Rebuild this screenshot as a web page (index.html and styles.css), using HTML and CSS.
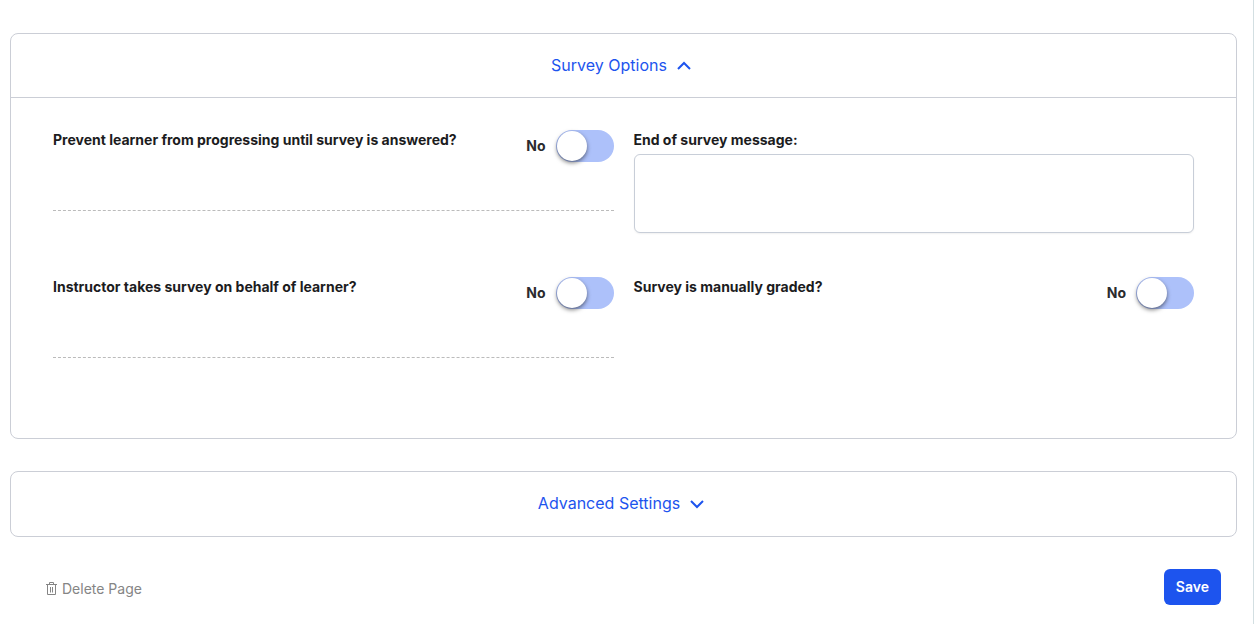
FILE: index.html
```html
<!DOCTYPE html>
<html lang="en">
<head>
  <meta charset="UTF-8">
  <title>Survey Settings</title>
  <link rel="stylesheet" href="styles.css">
</head>
<body>
  <form class="page">
    <!-- Survey options -->
    <section class="panel">
      <button type="button" class="panel-header open" aria-expanded="true" aria-controls="surveyOptions">
        Survey Options
        <svg class="chevron" viewBox="0 0 24 24" aria-hidden="true">
          <path d="M6 16l6-6 6 6"/>
        </svg>
      </button>

      <div id="surveyOptions" class="options">
        <div class="option divided">
          <label class="option-label" for="preventProgress">Prevent learner from progressing until survey is answered?</label>
          <div class="toggle">
            <span class="toggle-text">No</span>
            <input type="checkbox" class="switch" id="preventProgress" name="preventProgress">
          </div>
        </div>

        <div class="option stacked">
          <label class="option-label" for="endMessage">End of survey message:</label>
          <textarea id="endMessage" name="endMessage"></textarea>
        </div>

        <div class="option divided">
          <label class="option-label" for="instructorTakes">Instructor takes survey on behalf of learner?</label>
          <div class="toggle">
            <span class="toggle-text">No</span>
            <input type="checkbox" class="switch" id="instructorTakes" name="instructorTakes">
          </div>
        </div>

        <div class="option">
          <label class="option-label" for="manuallyGraded">Survey is manually graded?</label>
          <div class="toggle">
            <span class="toggle-text">No</span>
            <input type="checkbox" class="switch" id="manuallyGraded" name="manuallyGraded">
          </div>
        </div>
      </div>
    </section>

    <!-- Advanced settings (collapsed) -->
    <section class="panel">
      <button type="button" class="panel-header" aria-expanded="false">
        Advanced Settings
        <svg class="chevron" viewBox="0 0 24 24" aria-hidden="true">
          <path d="M6 10l6 6 6-6"/>
        </svg>
      </button>
    </section>

    <div class="footer">
      <button type="button" class="delete-button">
        <svg class="trash" viewBox="0 0 11 13" aria-hidden="true">
          <path d="M0 2.5h11M3.5 2.5v-2h4v2M1.5 2.5v10h8v-10M4.5 5v5.500M6.500 5v5.500"/>
        </svg>
        Delete Page
      </button>
      <button type="submit" class="save-button">Save</button>
    </div>
  </form>
</body>
</html>
```
FILE: styles.css
```css
* {
  box-sizing: border-box;
}

body {
  margin: 0;
  min-height: 100vh;
  background: #fff;
  border-right: 1px solid #d3dfe2;
  font-family: Inter, "Liberation Sans", sans-serif;
  color: #1c1c1e;
}

button {
  padding: 0;
  border: none;
  background: none;
  font-family: inherit;
  cursor: pointer;
}

.page {
  padding: 33px 16px 0 10px;
}

.panel {
  margin-bottom: 32px;
  border: 1px solid #cbced6;
  border-radius: 8px;
}

.panel-header {
  display: flex;
  align-items: center;
  justify-content: center;
  gap: 5px;
  width: 100%;
  height: 64px;
  padding-bottom: 2px;
  font-size: 16px;
  color: #1d54ee;
}

.panel-header.open {
  border-bottom: 1px solid #cbced6;
}

.chevron {
  width: 24px;
  height: 24px;
  fill: none;
  stroke: currentColor;
  stroke-width: 2;
}

.options {
  display: grid;
  grid-template-columns: 1fr 1fr;
  gap: 66px 20px;
  padding: 32px 42px 80px;
}

.option {
  display: flex;
  justify-content: space-between;
  align-items: flex-start;
  height: 81px;
}

.option.divided {
  border-bottom: 1px dashed #bbb;
}

.option.stacked {
  flex-direction: column;
  justify-content: flex-start;
  gap: 4px;
}

.option-label {
  font-size: 14px;
  font-weight: 700;
  line-height: 20px;
}

textarea {
  display: block;
  flex: none;
  width: 100%;
  height: 79px;
  padding: 8px 12px;
  border: 1px solid #c8ced8;
  border-radius: 6px;
  box-shadow: 0 1px 2px rgba(0, 0, 0, 0.06);
  font-family: inherit;
  font-size: 14px;
  resize: none;
}

.toggle {
  display: flex;
  align-items: center;
  gap: 10px;
}

.toggle-text {
  padding-bottom: 2px;
  font-size: 14px;
  font-weight: 700;
  color: #2b2b2e;
}

.switch {
  appearance: none;
  display: flex;
  width: 58px;
  height: 32px;
  margin: 0;
  padding: 1px;
  border-radius: 16px;
  background: #adc1fa;
  cursor: pointer;
}

.switch::before {
  content: "";
  width: 30px;
  height: 30px;
  border-radius: 50%;
  background: #fff;
  box-shadow: 0 2px 4px rgba(0, 0, 0, 0.5);
}

.switch:checked {
  justify-content: flex-end;
  background: #1d54ee;
}

.footer {
  display: flex;
  align-items: center;
  justify-content: space-between;
  padding: 0 16px 19px 36px;
}

.delete-button {
  display: flex;
  align-items: center;
  gap: 5px;
  padding-top: 2px;
  font-size: 14px;
  color: #858585;
}

.trash {
  width: 11px;
  height: 13px;
  fill: none;
  stroke: currentColor;
  stroke-width: 1;
}

.save-button {
  height: 36px;
  padding: 0 12px 1px;
  border-radius: 6px;
  background: #1d54ee;
  font-size: 14px;
  font-weight: 600;
  color: #fff;
}
```
